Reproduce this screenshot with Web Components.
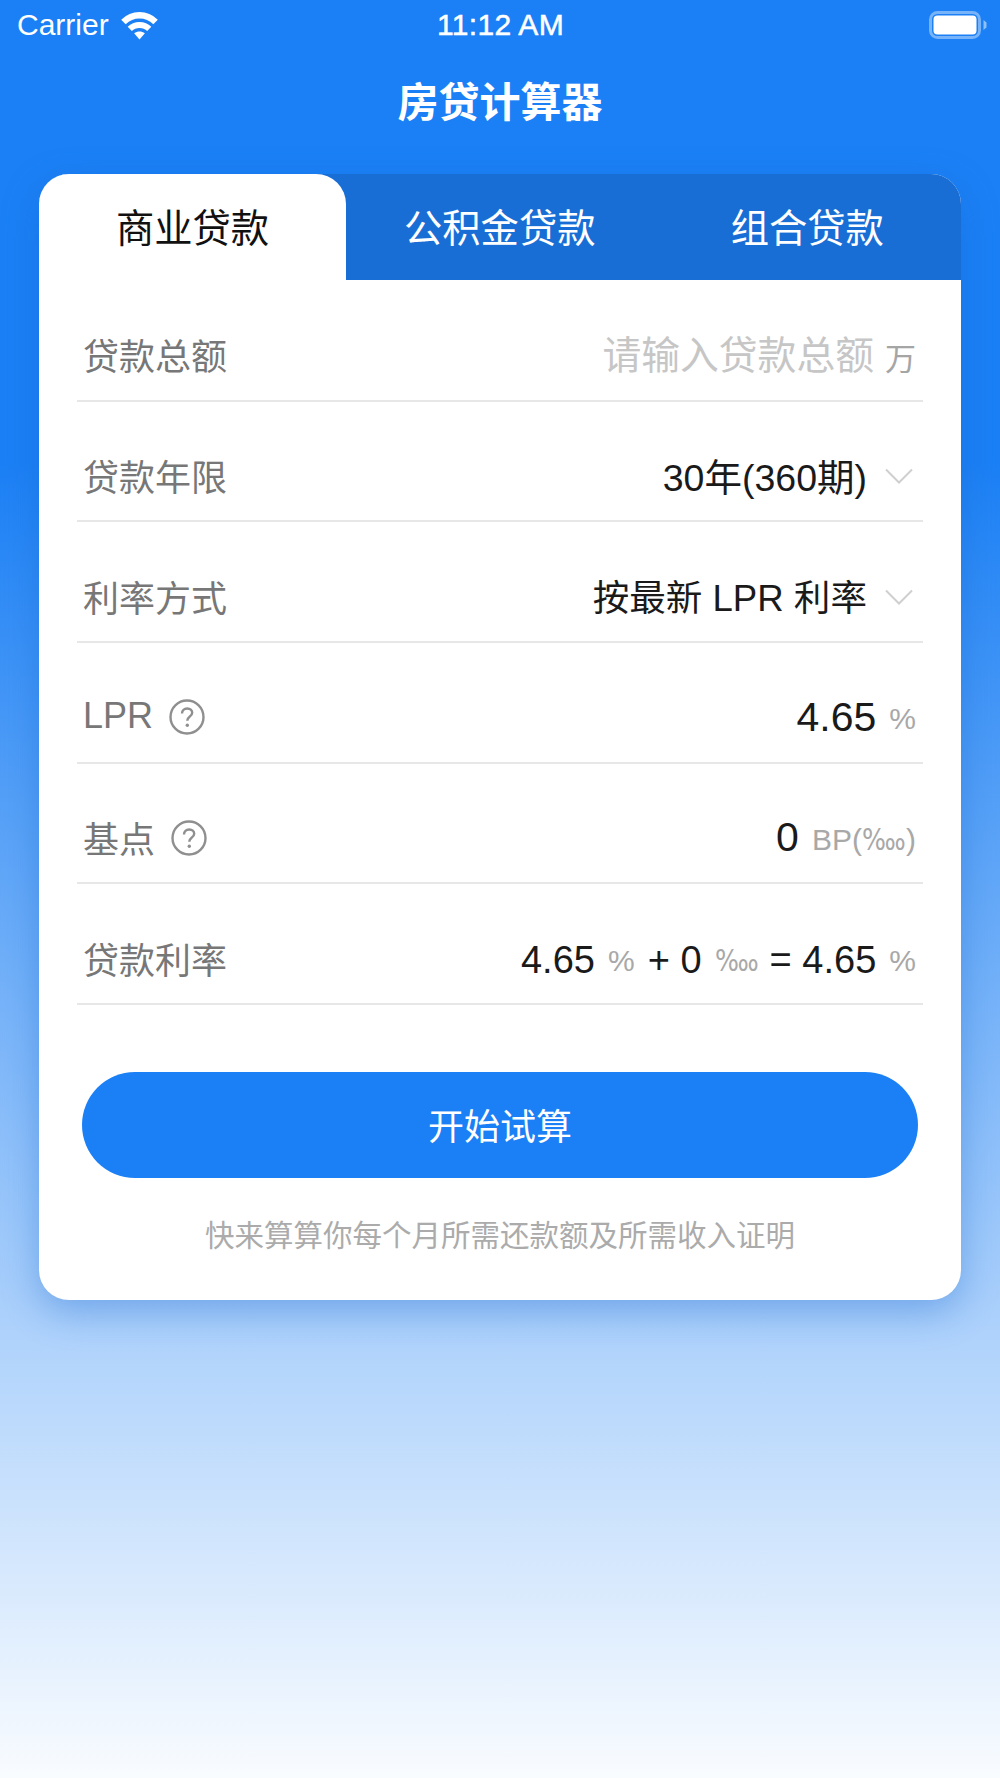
<!DOCTYPE html>
<html lang="zh">
<head>
<meta charset="utf-8">
<title>房贷计算器</title>
<style>
  html, body { margin: 0; height: 100%; }
  body {
    width: 1000px;
    height: 1778px;
    overflow: hidden;
    font-family: "Liberation Sans", "Noto Sans CJK SC", sans-serif;
    background: linear-gradient(#1b80f5 26%, #ffffff 102%);
  }
</style>
</head>
<body>
<app-screen>
  <status-bar slot="status"></status-bar>
  <page-title slot="title">房贷计算器</page-title>
  <loan-card slot="card">
    <loan-tabs slot="tabs"></loan-tabs>
    <form-row label="贷款总额">
      <span style="font-size:38.800px;color:#c6c6c6;position:relative;top:-3px">请输入贷款总额</span>
      <span style="font-size:31px;color:#a5a5a5;margin-left:11px;position:relative;top:1px">万</span>
    </form-row>
    <form-row label="贷款年限" select><span style="font-size:37.500px;color:#1a1a1a;position:relative;top:-1px">30年(360期)</span></form-row>
    <form-row label="利率方式" select><span style="font-size:36.600px;color:#1a1a1a;position:relative;top:-1px">按最新 LPR 利率</span></form-row>
    <form-row label="LPR" help>
      <span style="font-size:41px;color:#1a1a1a">4.65</span>
      <unit-text>%</unit-text>
    </form-row>
    <form-row label="基点" help>
      <span style="font-size:41px;color:#1a1a1a">0</span>
      <unit-text>BP(<per-myriad></per-myriad>)</unit-text>
    </form-row>
    <form-row label="贷款利率">
      <span style="font-size:38px;color:#1a1a1a;position:relative;top:2px">4.65</span>
      <unit-text>%</unit-text>
      <span style="font-size:38px;color:#1a1a1a;margin-left:13px;position:relative;top:2px">+ 0</span>
      <unit-text><per-myriad></per-myriad></unit-text>
      <span style="font-size:38px;color:#1a1a1a;margin-left:11px;position:relative;top:2px">= 4.65</span>
      <unit-text>%</unit-text>
    </form-row>
    <primary-button slot="action">开始试算</primary-button>
    <span slot="note">快来算算你每个月所需还款额及所需收入证明</span>
  </loan-card>
</app-screen>

<script>
class AppScreen extends HTMLElement {
	constructor() {
		super()
		this.attachShadow({ mode: 'open' })
		this.shadowRoot.innerHTML = /* html */ `
      <style>
        :host { display: flex; flex-direction: column; width: 1000px; height: 1778px; }
      </style>
      <slot name="status"></slot>
      <slot name="title"></slot>
      <slot name="card"></slot>
    `
	}
}

class StatusBar extends HTMLElement {
	constructor() {
		super()
		this.attachShadow({ mode: 'open' })
		this.shadowRoot.innerHTML = /* html */ `
      <style>
        :host {
          display: grid;
          grid-template-columns: 1fr auto 1fr;
          align-items: center;
          height: 50px;
          padding: 0 13px 0 17px;
          color: #fff;
          font-size: 30px;
        }
        .left { display: flex; align-items: center; gap: 12px; }
        .right { display: flex; justify-content: flex-end; align-items: center; }
        .time { letter-spacing: .3px; margin-right: 3px; -webkit-text-stroke: .5px #fff; }
        svg { display: block; }
      </style>
      <div class="left">
        <span>Carrier</span>
        <svg width="37" height="29" viewBox="0 0 38 29">
          <path d="M2.500 11C7 6.500 12.500 4 19 4s12 2.500 16.500 7" fill="none" stroke="#fff" stroke-width="6.500"/>
          <path d="M9 18c2.500-2.500 6-4 10-4s7.500 1.500 10 4" fill="none" stroke="#fff" stroke-width="6"/>
          <path d="M13.500 22.500c3.500-2.300 7.500-2.300 11 0l-5.500 6.500z" fill="#fff"/>
        </svg>
      </div>
      <span class="time">11:12 AM</span>
      <div class="right">
        <svg width="58" height="28" viewBox="0 0 58 28">
          <rect x="1.500" y="1.500" width="49" height="25" rx="7" fill="none" stroke="#fff" stroke-opacity=".4" stroke-width="3"/>
          <rect x="4.500" y="4.500" width="43" height="19" rx="4" fill="#fff"/>
          <path d="M54.500 9l3 2.500v5l-3 2.500z" fill="#fff" fill-opacity=".5"/>
        </svg>
      </div>
    `
	}
}

class PageTitle extends HTMLElement {
	constructor() {
		super()
		this.attachShadow({ mode: 'open' })
		this.shadowRoot.innerHTML = /* html */ `
      <style>
        :host {
          display: block;
          height: 124px;
          line-height: 106px;
          text-align: center;
          color: #fff;
          font-size: 41px;
          font-weight: 700;
        }
      </style>
      <slot></slot>
    `
	}
}

class LoanCard extends HTMLElement {
	constructor() {
		super()
		this.attachShadow({ mode: 'open' })
		this.shadowRoot.innerHTML = /* html */ `
      <style>
        :host {
          display: block;
          width: 922px;
          height: 1126px;
          margin-left: 39px;
          border-radius: 30px;
          background: #fff;
          box-shadow: 0 12px 36px rgba(20, 100, 205, .38);
        }
        .rows { padding: 1px 38px 0; }
        .action { display: block; padding: 67px 43px 0 43px; }
        .note {
          margin-top: 39px;
          text-align: center;
          font-size: 29.500px;
          line-height: 38px;
          color: #ababab;
        }
      </style>
      <slot name="tabs"></slot>
      <div class="rows"><slot></slot></div>
      <div class="action"><slot name="action"></slot></div>
      <div class="note"><slot name="note"></slot></div>
    `
	}
}

class LoanTabs extends HTMLElement {
	constructor() {
		super()
		this.attachShadow({ mode: 'open' })
		this.shadowRoot.innerHTML = /* html */ `
      <style>
        :host {
          display: grid;
          grid-template-columns: 307px 1fr 1fr;
          height: 106px;
          background: #196ed6;
          border-radius: 30px 30px 0 0;
          color: #fff;
          font-size: 38.300px;
        }
        .tab { display: flex; align-items: center; justify-content: center; padding-bottom: 4px; }
        .active { background: #fff; color: #111; border-radius: 30px 30px 0 0; }
      </style>
      <div class="tab active">商业贷款</div>
      <div class="tab">公积金贷款</div>
      <div class="tab">组合贷款</div>
    `
	}
}

class FormRow extends HTMLElement {
	constructor() {
		super()
		this.attachShadow({ mode: 'open' })
	}

	connectedCallback() {
		const help = this.hasAttribute('help') ? /* html */ `
      <svg class="help" width="36" height="36" viewBox="0 0 36 36">
        <circle cx="18" cy="18" r="16.500" fill="none" stroke="#8f8f8f" stroke-width="2.400"/>
        <path d="M13 14.500c0-3 2.200-5 5.200-5s5 1.800 5 4.300c0 2-1.200 3-2.600 4-1.500 1.100-2.300 2-2.300 4" fill="none" stroke="#8f8f8f" stroke-width="2.400"/>
        <circle cx="18.300" cy="26.300" r="1.700" fill="#8f8f8f"/>
      </svg>` : ''
		const chevron = this.hasAttribute('select') ? /* html */ `
      <svg class="chevron" width="28" height="16" viewBox="0 0 28 16">
        <path d="M1 1.500l13 13 13-13" fill="none" stroke="#cfcfcf" stroke-width="2"/>
      </svg>` : ''
		this.shadowRoot.innerHTML = /* html */ `
      <style>
        :host {
          display: flex;
          align-items: center;
          justify-content: space-between;
          box-sizing: border-box;
          height: 120.670px;
          padding: 30px 7px 0 6px;
          border-bottom: 2px solid #e7e7e7;
          font-size: 36px;
          color: #777;
        }
        .label { display: flex; align-items: center; gap: 16px; }
        .label span { position: relative; top: -1px; }
        .value { display: flex; align-items: center; font-size: 36px; }
        .help { display: block; }
        .chevron { display: block; margin: 0 3px 0 18px; }
      </style>
      <div class="label"><span>${this.getAttribute('label')}</span>${help}</div>
      <div class="value"><slot></slot>${chevron}</div>
    `
	}
}

class UnitText extends HTMLElement {
	constructor() {
		super()
		this.attachShadow({ mode: 'open' })
		this.shadowRoot.innerHTML = /* html */ `
      <style>
        :host {
          display: inline-block;
          margin-left: 13px;
          font-family: "Liberation Sans", "DejaVu Sans", sans-serif;
          font-size: 30px;
          color: #a8a8a8;
          position: relative;
          top: 2px;
          white-space: nowrap;
        }
      </style>
      <slot></slot>
    `
	}
}

// the per-ten-thousand glyph comes out too wide at unit size, so squeeze it
class PerMyriad extends HTMLElement {
	constructor() {
		super()
		this.attachShadow({ mode: 'open' })
		this.shadowRoot.innerHTML = /* html */ `
      <style>
        :host {
          display: inline-block;
          font-size: 30px;
          margin-right: -8px;
          transform: scaleX(.84);
          transform-origin: left center;
        }
      </style>
      ‱
    `
	}
}

class PrimaryButton extends HTMLElement {
	constructor() {
		super()
		this.attachShadow({ mode: 'open' })
		this.shadowRoot.innerHTML = /* html */ `
      <style>
        :host {
          display: flex;
          align-items: center;
          justify-content: center;
          box-sizing: border-box;
          height: 106px;
          padding-bottom: 2px;
          border-radius: 53px;
          background: #1b80f5;
          color: #fff;
          font-size: 36px;
        }
      </style>
      <slot></slot>
    `
	}
}

customElements.define('app-screen', AppScreen)
customElements.define('status-bar', StatusBar)
customElements.define('page-title', PageTitle)
customElements.define('loan-card', LoanCard)
customElements.define('loan-tabs', LoanTabs)
customElements.define('form-row', FormRow)
customElements.define('unit-text', UnitText)
customElements.define('per-myriad', PerMyriad)
customElements.define('primary-button', PrimaryButton)
</script>
</body>
</html>
